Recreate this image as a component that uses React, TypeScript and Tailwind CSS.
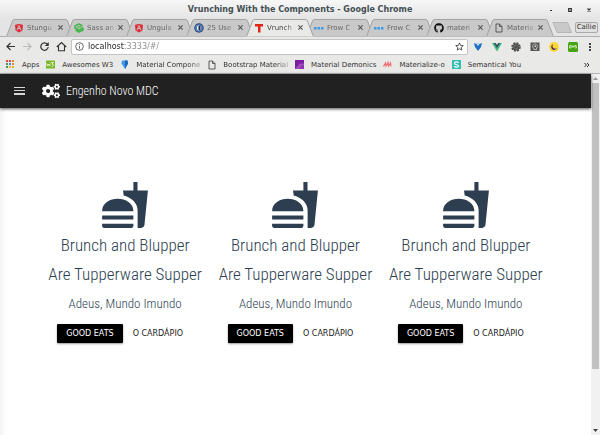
import { useState, type ReactNode } from "react";
import { FaAngular, FaCogs, FaGithub } from "react-icons/fa";

const stroke = { fill: "none", stroke: "currentColor", strokeWidth: 2 } as const;

function AngularIcon() {
  return <FaAngular className="size-[10px] text-[#dd2c3a]" />;
}

function SassIcon() {
  return (
    <svg viewBox="0 0 20 20" className="size-[10px]">
      <path
        d="M17 6L10 2 2 6v4l8 4 8-4M18 9v5l-8 4-7-4"
        fill="none"
        stroke="#43b649"
        strokeWidth="3"
        strokeLinejoin="round"
      />
      <path d="M6 8h9" stroke="#43b649" strokeWidth="2.5" />
    </svg>
  );
}

function KeyholeIcon() {
  return (
    <svg viewBox="0 0 20 20" className="size-[10px]">
      <circle cx="10" cy="10" r="9.5" fill="#27446e" />
      <circle cx="10" cy="10" r="7.5" fill="#4f82c4" />
      <ellipse cx="10" cy="10" rx="4" ry="5.5" fill="#f4f7fb" />
      <path d="M9 5h4v10H9z" fill="#1f2f4a" />
    </svg>
  );
}

function LetterTIcon() {
  return (
    <svg viewBox="0 0 20 20" className="size-[10px]">
      <path d="M2 2h16v5h-5v12H8V7H2z" fill="#e32313" />
    </svg>
  );
}

function DotsIcon() {
  return (
    <svg viewBox="0 0 20 20" className="size-[10px]">
      <path d="M0 8h5v5H0zM7 8h5v5H7zM14 8h5v5h-5z" fill="#3d9be9" />
    </svg>
  );
}

function PageIcon() {
  return (
    <svg viewBox="0 0 20 20" className="size-[10px] text-[#5a5a5a]">
      <path d="M4 2h7l5 5v11H4zM11 2v5h5" {...stroke} />
    </svg>
  );
}

const tabs: { title: string; icon: ReactNode; active?: boolean }[] = [
  { title: "Stungu", icon: <AngularIcon /> },
  { title: "Sass an", icon: <SassIcon /> },
  { title: "Ungula", icon: <AngularIcon /> },
  { title: "25 Use", icon: <KeyholeIcon /> },
  { title: "Vrunch", icon: <LetterTIcon />, active: true },
  { title: "Frow C", icon: <DotsIcon /> },
  { title: "Frow C", icon: <DotsIcon /> },
  { title: "materi", icon: <FaGithub className="size-[10px] text-[#111]" /> },
  { title: "Materia", icon: <PageIcon /> },
];

function Tab({ title, icon, active }: { title: string; icon: ReactNode; active?: boolean }) {
  return (
    <div className={`relative -ml-2 h-[18px] w-[68px] min-w-0 ${active ? "z-10" : ""}`}>
      <svg viewBox="0 0 68 18" preserveAspectRatio="none" className="absolute inset-0 size-full">
        <path
          d="M0 17.5L1 16.500 6.500 2Q7 .5 9 .5H59Q61 .5 61.500 2L67 16.500 68 17.500"
          fill={active ? "#e9e9e7" : "#c9c9c9"}
          stroke="#a3a3a3"
        />
      </svg>
      <div className="relative flex h-full items-center gap-[3px] pr-2.5 pl-2">
        <span className="shrink-0">{icon}</span>
        <span
          className={`flex-1 mask-r-from-70% mask-r-to-110% text-[7px] leading-[10px] whitespace-nowrap ${
            active ? "text-[#444]" : "text-[#666]"
          }`}
        >
          {title}
        </span>
        <button aria-label={`Close ${title}`} className="shrink-0 text-[#555]">
          <svg viewBox="0 0 10 10" className="size-[7px]">
            <path d="M2 2l6 6M8 2l-6 6" fill="none" stroke="currentColor" strokeWidth="1.6" />
          </svg>
        </button>
      </div>
    </div>
  );
}

function WindowControls() {
  return (
    <div className="absolute right-2 flex items-center gap-[13px] text-[#333]">
      <button aria-label="Minimize">
        <svg viewBox="0 0 6 6" className="size-1.5">
          <path d="M2 3h2v1H2z" fill="currentColor" />
        </svg>
      </button>
      <button aria-label="Maximize">
        <svg viewBox="0 0 6 6" className="size-1.5">
          <path d="M1.7 1.7h2.6v2.6H1.7z" fill="none" stroke="currentColor" strokeWidth="1.2" />
        </svg>
      </button>
      <button aria-label="Close">
        <svg viewBox="0 0 6 6" className="size-1.5">
          <path d="M1.5 1.5l3 3M4.5 1.5l-3 3" fill="none" stroke="currentColor" strokeWidth="1.1" />
        </svg>
      </button>
    </div>
  );
}

const extensions: { name: string; icon: ReactNode }[] = [
  {
    name: "Shield",
    icon: (
      <svg viewBox="0 0 20 20" className="size-[10px]">
        <path d="M2 2l5 2 3-2 3 2 5-2-2 8-6 8-6-8z" fill="#1d6fc4" />
        <path d="M7 4l3-2 3 2-3 4z" fill="#cfe6fa" />
      </svg>
    ),
  },
  {
    name: "Vue",
    icon: (
      <svg viewBox="0 0 20 20" className="size-[10px]">
        <path d="M0 2h20L10 19z" fill="#41b883" />
        <path d="M4 2h12l-6 10z" fill="#35495e" />
        <path d="M7.500 2h5L10 6z" fill="#e9e9e7" />
      </svg>
    ),
  },
  {
    name: "Capture",
    icon: (
      <svg viewBox="0 0 20 20" className="size-[10px]">
        <circle cx="10" cy="10" r="7" fill="#4a4a4a" />
        <circle cx="10" cy="10" r="8" fill="none" stroke="#4a4a4a" strokeWidth="3" strokeDasharray="4 2.280" />
        <path d="M6 8l4-2 4 3-1 4-4 1-3-3z" fill="none" stroke="#999" />
      </svg>
    ),
  },
  {
    name: "Hints",
    icon: (
      <svg viewBox="0 0 20 20" className="size-[10px]">
        <path d="M1 1h18v17H1z" fill="#555" />
        <path d="M7 12c-4-4-1-8 3-8s7 4 3 8v3H8z" fill="none" stroke="#ddd" strokeWidth="1.500" />
        <path d="M9 7h3v3H9z" fill="#ddd" />
      </svg>
    ),
  },
  {
    name: "Night mode",
    icon: (
      <svg viewBox="0 0 20 20" className="size-[10px]">
        <circle cx="10" cy="10" r="10" fill="#fdd835" />
        <path d="M9 4a6 6 0 1 0 7 8 5 5 0 0 1-7-8z" fill="#4a2a7a" />
      </svg>
    ),
  },
  {
    name: "Styles",
    icon: (
      <svg viewBox="0 0 20 20" className="size-[10px]">
        <rect width="20" height="20" rx="3" fill="#43a312" />
        <path d="M3 7h3v5H3zM8 12V7l2 3 2-3v5M17 7h-3v2h3v3h-3" fill="none" stroke="#d9f2c8" strokeWidth="1.500" />
      </svg>
    ),
  },
];

function Toolbar() {
  const [url, setUrl] = useState("localhost:3333/#/");
  return (
    <div className="flex h-[19px] items-center bg-[#e9e9e7] pr-2 pl-[5px] text-[#333]">
      <div className="flex gap-[6px]">
        <button aria-label="Back">
          <svg viewBox="0 0 22 22" className="size-[11px]">
            <path d="M20 11H4M11 4l-7 7 7 7" {...stroke} strokeWidth={2.4} />
          </svg>
        </button>
        <button aria-label="Forward" className="text-[#bbb]">
          <svg viewBox="0 0 22 22" className="size-[11px]">
            <path d="M2 11h16M11 4l7 7-7 7" {...stroke} strokeWidth={2.4} />
          </svg>
        </button>
        <button aria-label="Reload">
          <svg viewBox="0 0 22 22" className="size-[11px]">
            <path d="M17 6.500A7.500 7.500 0 1 0 18.500 12" {...stroke} strokeWidth={2.400} />
            <path d="M19.500 2v8h-8z" fill="currentColor" />
          </svg>
        </button>
        <button aria-label="Home">
          <svg viewBox="0 0 22 22" className="size-[11px]">
            <path d="M1.500 12L11 3l9.500 9M5 10v9.500h12V10" {...stroke} strokeWidth={2.200} />
          </svg>
        </button>
      </div>
      <div className="ml-1 flex h-4 min-w-0 flex-1 items-center gap-1 rounded-xs border border-[#c4c4c4] bg-white px-[3px]">
        <svg viewBox="0 0 20 20" className="size-[9px] shrink-0 text-[#555]">
          <circle cx="10" cy="10" r="8.500" {...stroke} />
          <path d="M10 9v6M10 5v2" {...stroke} />
        </svg>
        <input
          aria-label="Address"
          value={url}
          onChange={(e) => setUrl(e.target.value)}
          className="h-3 min-w-0 flex-1 bg-linear-to-r from-[#222] from-[37px] to-[#888] to-[37px] bg-clip-text text-[8px] leading-3 text-transparent caret-black outline-none"
        />
        <button aria-label="Bookmark this page">
          <svg viewBox="0 0 20 20" className="size-[9px]">
            <path d="M10 2l2.400 5.500 6 .5-4.600 4 1.400 6-5.200-3.200L4.800 18l1.400-6-4.600-4 6-.5z" {...stroke} strokeWidth={1.800} />
          </svg>
        </button>
      </div>
      <div className="ml-[5px] flex gap-[9px]">
        {extensions.map((e) => (
          <button key={e.name} aria-label={e.name}>
            {e.icon}
          </button>
        ))}
      </div>
      <button aria-label="Menu" className="ml-[10px]">
        <svg viewBox="0 0 4 10" className="h-[10px] w-1">
          <path d="M1 1h2v2H1zM1 4h2v2H1zM1 7h2v2H1z" fill="#444" />
        </svg>
      </button>
    </div>
  );
}

const bookmarks: { title: string; icon: ReactNode; clip?: boolean }[] = [
  {
    title: "Apps",
    icon: (
      <svg viewBox="0 0 9 9" className="size-[9px]">
        <path d="M0 0h2v2H0zM3 0h2v2H3z" fill="#e0483e" />
        <path d="M6 0h2v2H6zM6 3h2v2H6z" fill="#e8883a" />
        <path d="M0 3h2v2H0zM0 6h2v2H0z" fill="#3c9a50" />
        <path d="M3 3h2v2H3z" fill="#4285f4" />
        <path d="M3 6h2v2H3zM6 6h2v2H6z" fill="#e5b62c" />
      </svg>
    ),
  },
  {
    title: "Awesomes W3",
    icon: (
      <svg viewBox="0 0 18 16" className="size-[9px]">
        <path d="M0 0h18v16H0z" fill="#7cb928" />
        <path d="M1 6l2 5 2-4 2 4 2-5M10 4h5l-3 3c4 0 4 5-1 5" fill="none" stroke="#fff" strokeWidth="1.500" />
      </svg>
    ),
  },
  {
    title: "Material Compone",
    clip: true,
    icon: (
      <svg viewBox="0 0 18 18" className="size-[9px]">
        <path d="M4 1h11l1 6-6 11L3 7z" fill="#3f9be8" />
        <path d="M10 1h5l1 6-6 11z" fill="#1b66b8" />
      </svg>
    ),
  },
  { title: "Bootstrap Material", clip: true, icon: <PageIcon /> },
  {
    title: "Material Demonics",
    icon: (
      <svg viewBox="0 0 18 18" className="size-[9px]">
        <path d="M0 0h18v18H0z" fill="#7b1fa2" />
        <path d="M0 18L10 7h8v11z" fill="#a04fbd" />
        <path d="M8 18l6-8h4v8z" fill="#8e35b0" />
      </svg>
    ),
  },
  {
    title: "Materialize-o",
    icon: (
      <svg viewBox="0 0 18 18" className="size-[9px]">
        <path d="M1 13L5 6l1 6 4-7 1 7 4-6 1 7" fill="none" stroke="#ee6e73" strokeWidth="2.500" />
      </svg>
    ),
  },
  {
    title: "Semantical You",
    icon: (
      <svg viewBox="0 0 18 18" className="size-[9px]">
        <path d="M0 0h18v18H0z" fill="#35bdb2" />
        <path d="M13 6C12 3 5 3 5 6.500S13 9 13 12s-8 3-8 0" fill="none" stroke="#fff" strokeWidth="2.400" />
      </svg>
    ),
  },
];

function BookmarksBar() {
  return (
    <nav className="flex h-[18px] items-center gap-[7px] border-b border-[#b5b5b5] bg-[#e9e9e7] pr-2.5 pl-1.5 text-[7px] leading-[10px] text-[#333]">
      {bookmarks.map((b) => (
        <a key={b.title} href="#" className="flex items-center gap-[7px] whitespace-nowrap">
          <span className="w-[9px]">{b.icon}</span>
          <span className={b.clip ? "min-w-[64px] mask-r-from-80% mask-r-to-110%" : ""}>{b.title}</span>
        </a>
      ))}
      <button aria-label="More bookmarks" className="ml-auto">
        <svg viewBox="0 0 12 12" className="size-[6px]">
          <path d="M1 2l4 4-4 4M6 2l4 4-4 4" {...stroke} />
        </svg>
      </button>
    </nav>
  );
}

function AppBar() {
  return (
    <header className="relative flex h-[34px] shrink-0 items-center bg-[#212121] pl-[14px] text-white shadow-[0_1px_3px_rgba(0,0,0,0.7)]">
      <button aria-label="Open menu">
        <svg viewBox="0 0 11 8" className="h-2 w-[11px]">
          <path d="M0 0h11v1H0zM0 3h11v1H0zM0 6h11v2H0z" fill="#d8d8d8" />
        </svg>
      </button>
      <FaCogs className="ml-[17px] size-[18px]" />
      <h1 className="ml-1.5 font-['Roboto_Condensed',Roboto,sans-serif] text-[12px] leading-4 font-light">
        Engenho Novo MDC
      </h1>
    </header>
  );
}

function MealCard() {
  return (
    <article className="flex flex-col items-center text-[#2c3e50]">
      <svg viewBox="0 0 24 24" className="size-[50px]" fill="currentColor">
        <path d="M18.060 22.990h1.660c.84 0 1.530-.64 1.630-1.460L23 5.050h-5V1h-1.970v4.050h-4.970l.3 2.340c1.710.47 3.310 1.320 4.270 2.260 1.440 1.420 2.430 2.890 2.430 5.290v8.050zM1 21.990V21h15.030v.99c0 .55-.45 1-1.010 1H2.010c-.56 0-1.010-.45-1.010-1zM16.030 14.990c0-8-15.030-8-15.030 0h15.030zM1.020 17h15v2h-15z" />
      </svg>
      <div className="mt-px text-center font-['Roboto_Condensed',Roboto,sans-serif] font-light whitespace-nowrap">
        <h2 className="text-[17px] leading-[29px]">Brunch and Blupper</h2>
        <h2 className="text-[17px] leading-[29px]">Are Tupperware Supper</h2>
        <h3 className="text-[13px] leading-[29px]">Adeus, Mundo Imundo</h3>
      </div>
      <div className="mt-[6px] flex text-[8px] leading-[19px] whitespace-nowrap">
        <button className="rounded-[1px] bg-black px-[9px] text-white shadow-[0_1px_2px_rgba(0,0,0,0.4)]">
          GOOD EATS
        </button>
        <button className="px-[10px] text-[#222]">O CARDÁPIO</button>
      </div>
    </article>
  );
}

function Scrollbar() {
  return (
    <div aria-hidden="true" className="flex w-[9px] shrink-0 flex-col items-center bg-[#f1f1f1]">
      <svg viewBox="0 0 9 9" className="size-[9px]">
        <path d="M2 6l2.500-3L7 6z" fill="#999" />
      </svg>
      <div className="w-[7px] grow-[286] bg-[#c1c1c1]" />
      <div className="grow-[57]" />
      <svg viewBox="0 0 9 9" className="size-[9px]">
        <path d="M2 3l2.500 3L7 3z" fill="#444" />
      </svg>
    </div>
  );
}

export default function App() {
  return (
    <div className="flex h-screen flex-col overflow-hidden bg-white font-['DejaVu_Sans',sans-serif]">
      <div className="relative flex h-[19px] shrink-0 items-center justify-center bg-linear-to-b from-[#f7f7f7] to-[#e4e4e4] text-[8px] leading-[10px] font-bold text-[#444f54]">
        Vrunching With the Components - Google Chrome
        <WindowControls />
      </div>
      <div className="shrink-0 bg-[#e4e4e4]">
        <div className="flex h-[18px] items-center border-b border-[#b0b0b0] pr-0.5 pl-3.5">
          {tabs.map((t, i) => (
            <Tab key={i} {...t} />
          ))}
          <button aria-label="New tab" className="-ml-0.5">
            <svg viewBox="0 0 20 11" className="h-[11px] w-5">
              <path d="M1 .5h14.500L19.500 10.500H5z" fill="#c9c9c9" stroke="#b5b5b5" />
            </svg>
          </button>
          <button className="ml-auto h-[11px] rounded-xs border border-[#aaa] bg-[#e0e0e0] px-px text-[7px] leading-[9px] text-[#333]">
            Callie
          </button>
        </div>
        <Toolbar />
        <BookmarksBar />
      </div>
      <div className="flex min-h-0 flex-1">
        <div className="flex min-w-0 flex-1 flex-col">
          <AppBar />
          <main className="grid flex-1 grid-cols-3 content-start bg-linear-to-r from-[#f3f3f3] to-white to-[6px] px-10 pt-[72px]">
            <MealCard />
            <MealCard />
            <MealCard />
          </main>
        </div>
        <Scrollbar />
      </div>
    </div>
  );
}
